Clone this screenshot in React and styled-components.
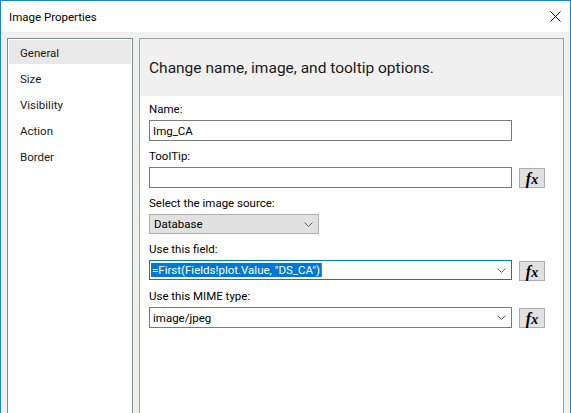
import React from "react";
import styled, { createGlobalStyle } from "styled-components";

const GlobalStyle = createGlobalStyle`
  body {
    margin: 0;
    font-family: "Segoe UI", Roboto, "Noto Sans", sans-serif;
    font-size: 11.5px;
    color: #000;
  }
`;

const Window = styled.div`
  box-sizing: border-box;
  width: 571px;
  height: 413px;
  border: 1px solid #1883d7;
  border-bottom: none;
  background: #f0f0f0;
  display: flex;
  flex-direction: column;
  overflow: hidden;
`;

const TitleBar = styled.div`
  height: 31px;
  flex: none;
  background: #fff;
  display: flex;
  align-items: center;
  justify-content: space-between;
  padding: 0 9px 0 8px;
`;

const Title = styled.span`
  font-size: 11.5px;
  padding-top: 1px;
`;

const Body = styled.div`
  flex: 1;
  display: flex;
  gap: 6px;
  padding: 6px 6px 0 6px;
  min-height: 0;
`;

const Nav = styled.div`
  box-sizing: border-box;
  width: 126px;
  flex: none;
  background: #fff;
  border: 1px solid #828790;
  border-bottom: none;
  padding: 1px;
`;

const NavItem = styled.div`
  box-sizing: border-box;
  height: 24px;
  margin-bottom: 2px;
  padding: 2px 0 0 11px;
  display: flex;
  align-items: center;
  color: #1a1a1a;
  background: ${(p) => (p.$active ? "#e8e8e8" : "transparent")};
`;

const Panel = styled.div`
  flex: 1;
  background: #fff;
  border: 1px solid #a0a0a0;
  border-bottom: none;
`;

const Header = styled.div`
  box-sizing: border-box;
  height: 57px;
  background: #f0f0f0;
  display: flex;
  align-items: center;
  padding: 1px 0 0 9px;
  font-size: 15.5px;
  color: #1a1a1a;
`;

const Content = styled.div`
  padding: 0 9px;
`;

const Group = styled.div`
  margin-bottom: 2px;
`;

const Label = styled.div`
  box-sizing: border-box;
  height: 24px;
  padding-top: 1px;
  display: flex;
  align-items: center;
`;

const Row = styled.div`
  display: flex;
  align-items: flex-start;
  gap: 7px;
`;

const TextBox = styled.div`
  box-sizing: border-box;
  width: ${(p) => p.$width || 363}px;
  height: ${(p) => p.$height || 21}px;
  border: 1px solid ${(p) => (p.$focused ? "#0078d7" : "#7a7a7a")};
  background: #fff;
  display: flex;
  align-items: center;
  padding: 0 5px 0 ${(p) => (p.$focused ? 1 : 3)}px;
`;

const Dropdown = styled.div`
  box-sizing: border-box;
  width: 170px;
  height: 20px;
  border: 1px solid #adadad;
  background: #e1e1e1;
  display: flex;
  align-items: center;
  justify-content: space-between;
  padding: 0 5px 0 4px;
`;

const ValueText = styled.span`
  flex: 1;
  white-space: nowrap;
  display: flex;
  align-items: center;
`;

const Selected = styled.span`
  background: #0078d7;
  color: #fff;
  line-height: 14px;
  padding: 0 1px;
`;

const Caret = styled.span`
  display: inline-block;
  width: 1px;
  height: 14px;
  background: #c8641e;
`;

const FxButton = styled.div`
  box-sizing: border-box;
  width: 26px;
  height: 20px;
  margin-top: 1px;
  border: 1px solid #adadad;
  background: #e1e1e1;
  display: flex;
  align-items: baseline;
  justify-content: center;
  padding-top: 2px;
  font-family: "Liberation Serif", "DejaVu Serif", serif;
  font-style: italic;
  font-weight: bold;
  font-size: 16px;
  line-height: 1;
`;

const FxSub = styled.span`
  font-size: 14px;
  margin-left: 0;
`;

const Chevron = () => (
  <svg width="9" height="5" viewBox="0 0 9 5">
    <polyline points="0.5,0.5 4.5,4.5 8.5,0.5" fill="none" stroke="#606060" strokeWidth="1" />
  </svg>
);

const CloseIcon = () => (
  <svg width="11" height="11" viewBox="0 0 11 11">
    <path d="M0.5 0.5 L10.5 10.5 M10.5 0.5 L0.5 10.5" stroke="#000" strokeWidth="1" />
  </svg>
);

const Fx = () => (
  <FxButton>
    f<FxSub>x</FxSub>
  </FxButton>
);

const navItems = ["General", "Size", "Visibility", "Action", "Border"];

export default function App() {
  return (
    <>
      <GlobalStyle />
      <Window>
        <TitleBar>
          <Title>Image Properties</Title>
          <CloseIcon />
        </TitleBar>
        <Body>
          <Nav>
            {navItems.map((item, i) => (
              <NavItem key={item} $active={i === 0}>
                {item}
              </NavItem>
            ))}
          </Nav>
          <Panel>
            <Header>Change name, image, and tooltip options.</Header>
            <Content>
              <Group>
                <Label>Name:</Label>
                <Row>
                  <TextBox>
                    <ValueText>Img_CA</ValueText>
                  </TextBox>
                </Row>
              </Group>
              <Group>
                <Label>ToolTip:</Label>
                <Row>
                  <TextBox />
                  <Fx />
                </Row>
              </Group>
              <Group>
                <Label>Select the image source:</Label>
                <Dropdown>
                  <ValueText>Database</ValueText>
                  <Chevron />
                </Dropdown>
              </Group>
              <Group>
                <Label>Use this field:</Label>
                <Row>
                  <TextBox $focused $height={20}>
                    <ValueText>
                      <Selected>=First(Fields!plot.Value, "DS_CA")</Selected>
                      <Caret />
                    </ValueText>
                    <Chevron />
                  </TextBox>
                  <Fx />
                </Row>
              </Group>
              <Group>
                <Label>Use this MIME type:</Label>
                <Row>
                  <TextBox>
                    <ValueText>image/jpeg</ValueText>
                    <Chevron />
                  </TextBox>
                  <Fx />
                </Row>
              </Group>
            </Content>
          </Panel>
        </Body>
      </Window>
    </>
  );
}
